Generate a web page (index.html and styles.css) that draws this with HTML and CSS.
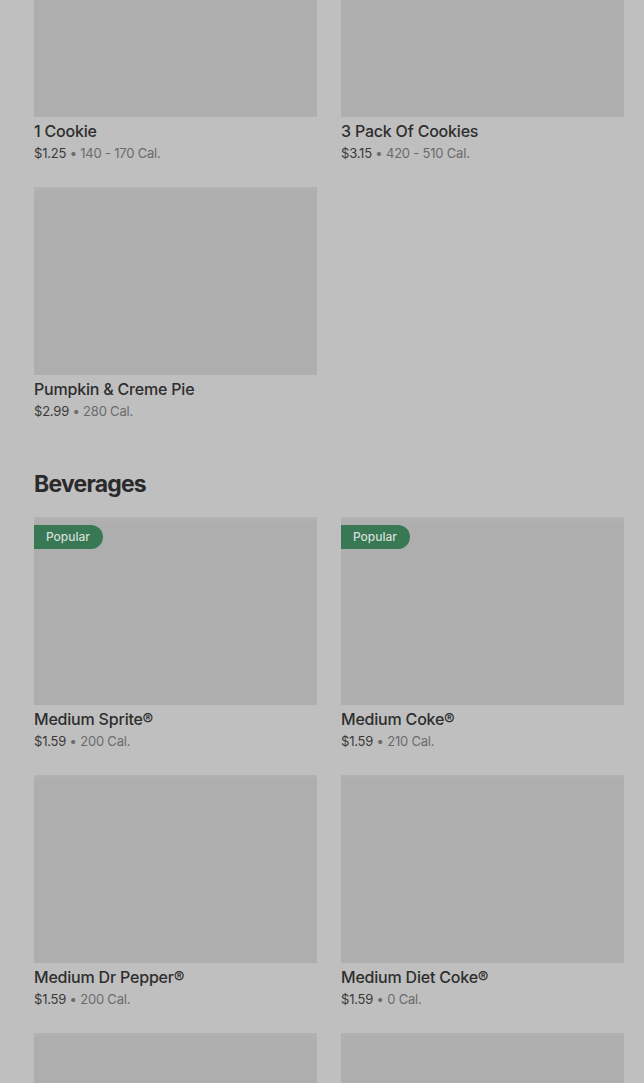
FILE: index.html
```html
<!DOCTYPE html>
<html lang="en">
<head>
<meta charset="utf-8" />
<meta name="viewport" content="width=device-width, initial-scale=1" />
<title>Menu</title>
<link rel="stylesheet" href="styles.css">
</head>
<body>
<div class="menu">
  <!-- Desserts (Fortsetzung) -->
  <section class="section">
    <div class="grid">
      <article class="item">
        <div class="thumb"></div>
        <div class="name">1 Cookie</div>
        <div class="meta"><span class="price">$1.25</span> • 140 - 170 Cal.</div>
      </article>
      <article class="item">
        <div class="thumb"></div>
        <div class="name">3 Pack Of Cookies</div>
        <div class="meta"><span class="price">$3.15</span> • 420 - 510 Cal.</div>
      </article>
      <article class="item">
        <div class="thumb"></div>
        <div class="name">Pumpkin &amp; Creme Pie</div>
        <div class="meta"><span class="price">$2.99</span> • 280 Cal.</div>
      </article>
    </div>
  </section>

  <!-- Beverages -->
  <section class="section">
    <h2 class="section-title">Beverages</h2>
    <div class="grid">
      <article class="item">
        <div class="thumb"><span class="badge">Popular</span></div>
        <div class="name">Medium Sprite®</div>
        <div class="meta"><span class="price">$1.59</span> • 200 Cal.</div>
      </article>
      <article class="item">
        <div class="thumb"><span class="badge">Popular</span></div>
        <div class="name">Medium Coke®</div>
        <div class="meta"><span class="price">$1.59</span> • 210 Cal.</div>
      </article>
      <article class="item">
        <div class="thumb"></div>
        <div class="name">Medium Dr Pepper®</div>
        <div class="meta"><span class="price">$1.59</span> • 200 Cal.</div>
      </article>
      <article class="item">
        <div class="thumb"></div>
        <div class="name">Medium Diet Coke®</div>
        <div class="meta"><span class="price">$1.59</span> • 0 Cal.</div>
      </article>
      <!-- nächste Reihe, nur angeschnitten sichtbar -->
      <article class="item">
        <div class="thumb"></div>
      </article>
      <article class="item">
        <div class="thumb"></div>
      </article>
    </div>
  </section>
</div>
</body>
</html>
```

FILE: styles.css
```css
:root{--bg:#bfbfbf;--thumb:#aeaeae;--ink:#2e2e2e;--muted:#6b6b6b;--green:#397855}
html,body{margin:0;background:var(--bg);color:var(--ink);font-family:Inter,"Noto Sans",Arial,sans-serif;overflow:hidden}

/* Seite ist gescrollt: erstes Bild ragt oben raus */
.menu{margin-top:-71px;padding:0 20px 0 34px}

.section + .section{margin-top:23px}
.section-title{margin:0 0 17px;font-size:23px;line-height:32px;font-weight:700;letter-spacing:-0.8px;color:#2a2a2a}

/* 2 Spalten */
.grid{display:grid;grid-template-columns:283px 283px;column-gap:24px}
.item{padding-bottom:24px}
.thumb{position:relative;height:188px;background:linear-gradient(180deg,#b3b3b3 0,#aeaeae 6px);background-color:var(--thumb)}
.name{margin-top:3px;font-size:16px;line-height:22px;font-weight:500;letter-spacing:-0.2px}
.meta{margin-top:1px;font-size:13px;line-height:20px;color:var(--muted);letter-spacing:-0.2px}
.meta .price{color:#3a3a3a}

/* Badge oben links am Bild */
.badge{position:absolute;top:8px;left:0;height:24px;line-height:24px;padding:0 13px 0 12px;border-radius:0 12px 12px 0;background:var(--green);color:#d3ded8;font-size:12px;font-weight:500}
```
